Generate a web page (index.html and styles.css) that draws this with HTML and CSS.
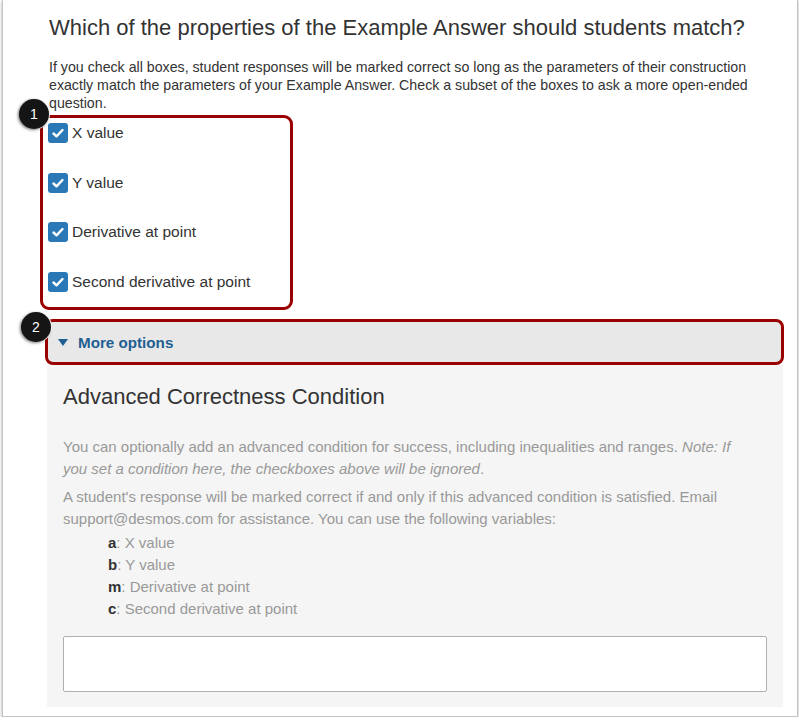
FILE: index.html
```html
<!DOCTYPE html>
<html>
<head>
<meta charset="utf-8">
<link rel="stylesheet" href="styles.css">
</head>
<body>
<div class="frame">
  <div class="content">
    <h2 class="title">Which of the properties of the Example Answer should students match?</h2>
    <p class="intro">If you check all boxes, student responses will be marked correct so long as the parameters of their construction exactly match the parameters of your Example Answer. Check a subset of the boxes to ask a more open-ended question.</p>
    <div class="checks">
      <label class="check"><span class="box"><svg viewBox="0 0 20 20" width="20" height="20"><path d="M5.5 10.5 L8.5 13.3 L14.5 7" fill="none" stroke="#fff" stroke-width="2.4" stroke-linecap="round" stroke-linejoin="round"/></svg></span>X value</label>
      <label class="check"><span class="box"><svg viewBox="0 0 20 20" width="20" height="20"><path d="M5.5 10.5 L8.5 13.3 L14.5 7" fill="none" stroke="#fff" stroke-width="2.4" stroke-linecap="round" stroke-linejoin="round"/></svg></span>Y value</label>
      <label class="check"><span class="box"><svg viewBox="0 0 20 20" width="20" height="20"><path d="M5.5 10.5 L8.5 13.3 L14.5 7" fill="none" stroke="#fff" stroke-width="2.4" stroke-linecap="round" stroke-linejoin="round"/></svg></span>Derivative at point</label>
      <label class="check"><span class="box"><svg viewBox="0 0 20 20" width="20" height="20"><path d="M5.5 10.5 L8.5 13.3 L14.5 7" fill="none" stroke="#fff" stroke-width="2.4" stroke-linecap="round" stroke-linejoin="round"/></svg></span>Second derivative at point</label>
    </div>
    <div class="more"><span class="tri"></span>More options</div>
    <div class="panel">
      <h3 class="adv">Advanced Correctness Condition</h3>
      <p class="grey">You can optionally add an advanced condition for success, including inequalities and ranges. <em>Note: If you set a condition here, the checkboxes above will be ignored</em>.</p>
      <p class="grey second">A student's response will be marked correct if and only if this advanced condition is satisfied. Email support@desmos.com for assistance. You can use the following variables:</p>
      <ul class="vars">
        <li><b>a</b>: X value</li>
        <li><b>b</b>: Y value</li>
        <li><b>m</b>: Derivative at point</li>
        <li><b>c</b>: Second derivative at point</li>
      </ul>
      <div class="input"></div>
    </div>
  </div>
  <div class="badge b1">1</div>
  <div class="badge b2">2</div>
</div>
</body>
</html>
```

FILE: styles.css
```css
html, body {
  margin: 0;
  padding: 0;
  background: #fff;
}
body {
  font-family: "Liberation Sans", Arial, sans-serif;
  color: #333;
}
.frame {
  position: relative;
  margin-left: 2px;
  width: 796px;
  height: 717px;
  box-sizing: border-box;
  border: 1px solid #c4c4c4;
  border-top: none;
  box-shadow: 0 1px 3px rgba(0,0,0,0.35);
  padding: 15px 14px 0 37px;
  background: #fff;
}
.content {
  display: flex;
  flex-direction: column;
  align-items: flex-start;
}
.title {
  margin: 0;
  padding-left: 9px;
  font-size: 22px;
  line-height: 26px;
  font-weight: normal;
  color: #333;
}
.intro {
  margin: 17px 0 0;
  padding-left: 9px;
  font-size: 14.2px;
  line-height: 18px;
  color: #333;
}
.checks {
  margin-top: 3px;
  width: 253px;
  height: 195px;
  box-sizing: border-box;
  border: 3px solid #9b0000;
  border-radius: 9px;
  padding: 5px 0 0 5px;
  display: flex;
  flex-direction: column;
  gap: 29.5px;
}
.check {
  display: flex;
  align-items: center;
  gap: 4px;
  height: 20px;
  font-size: 15.5px;
  color: #333;
}
.box {
  width: 20px;
  height: 20px;
  border-radius: 3px;
  background: #2a79b6;
  display: block;
}
.box svg {
  display: block;
}
.more {
  margin: 9px 0 0 5px;
  width: 739px;
  height: 46px;
  box-sizing: border-box;
  border: 3px solid #9b0000;
  border-radius: 8px;
  background: #e8e8e8;
  display: flex;
  align-items: center;
  padding-left: 10px;
  font-size: 15.2px;
  font-weight: bold;
  color: #1f5f92;
}
.tri {
  width: 0;
  height: 0;
  border-left: 5px solid transparent;
  border-right: 5px solid transparent;
  border-top: 7px solid #1f5f92;
  margin-right: 10px;
}
.panel {
  margin-left: 7px;
  width: 736px;
  box-sizing: border-box;
  background: #f5f5f5;
  padding: 19px 16px 15px 16px;
}
.adv {
  margin: 0;
  font-size: 22px;
  line-height: 26px;
  font-weight: normal;
  color: #333;
}
.grey {
  margin: 26px 0 0;
  padding-right: 30px;
  font-size: 15px;
  line-height: 22px;
  color: #999;
}
.grey.second {
  margin-top: 6px;
}
.vars {
  list-style: none;
  margin: 2px 0 0;
  padding-left: 45px;
  font-size: 15px;
  line-height: 22px;
  color: #999;
}
.vars b {
  color: #333;
}
.input {
  margin-top: 16px;
  height: 56px;
  box-sizing: border-box;
  background: #fff;
  border: 1px solid #b0b0b0;
  border-radius: 2px;
}
.badge {
  position: absolute;
  width: 30px;
  height: 30px;
  border-radius: 50%;
  background: #151515;
  color: #fff;
  font-size: 14px;
  line-height: 30px;
  text-align: center;
  box-shadow: -1px 1px 3px rgba(0,0,0,0.55), 0 0 0 1px #fff;
}
.b1 {
  left: 16px;
  top: 99px;
}
.b2 {
  left: 18px;
  top: 312px;
}
```
